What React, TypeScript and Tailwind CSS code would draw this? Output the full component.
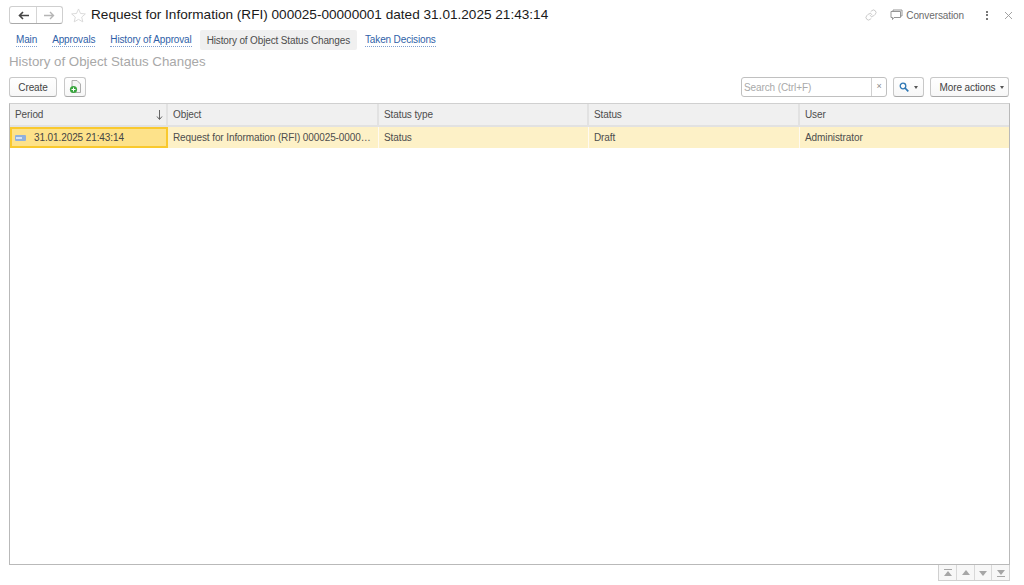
import { FC, ReactNode } from "react";
import { Link } from "lucide-react";

const tabs = ["Main", "Approvals", "History of Approval", "History of Object Status Changes", "Taken Decisions"];
const activeTab = "History of Object Status Changes";

const columns = [
  { label: "Period", value: "31.01.2025 21:43:14", width: "w-[158px]" },
  { label: "Object", value: "Request for Information (RFI) 000025-0000…", width: "w-[211px]" },
  { label: "Status type", value: "Status", width: "w-[210px]" },
  { label: "Status", value: "Draft", width: "w-[211px]" },
  { label: "User", value: "Administrator", width: "flex-1" },
];

const ToolButton: FC<{ className?: string; children: ReactNode }> = ({ className = "", children }) => (
  <div
    className={`flex h-[20px] items-center justify-center rounded-[3px] border border-[#c8c8c8] border-b-[#a9a9a9] bg-gradient-to-b from-white to-[#f7f7f7] text-[#444] ${className}`}
  >
    {children}
  </div>
);

const Caret = () => <span className="h-0 w-0 border-x-[2.5px] border-t-[3px] border-x-transparent border-t-[#555]" />;

const NavArrow: FC<{ path: string }> = ({ path }) => (
  <div className="flex h-full w-[18px] items-center justify-center border-l border-[#d8d8d8] first:border-l-0">
    <svg width="10" height="8" viewBox="0 0 10 8" fill="#a6a6a6">
      <path d={path} />
    </svg>
  </div>
);

export default function App() {
  return (
    <div className="flex h-[585px] w-[1024px] flex-col overflow-hidden bg-white pl-[9px] pr-[15px] text-[10px] tracking-[-0.1px] text-[#4d4d4d] [font-family:'Liberation_Sans',Arial,sans-serif]">
      <div className="mt-[6px] flex h-[18px] items-center">
        <div className="flex h-[18px] w-[54px] rounded-[3px] border border-[#cfcfcf] border-b-[#aaa]">
          <div className="flex w-[27px] items-center justify-center border-r border-[#d5d5d5]">
            <svg width="11" height="9" viewBox="0 0 11 9" fill="none" stroke="#444" strokeWidth="1.6">
              <path d="M11 4.5H2M5 1 1.5 4.5 5 8" />
            </svg>
          </div>
          <div className="flex flex-1 items-center justify-center">
            <svg width="11" height="9" viewBox="0 0 11 9" fill="none" stroke="#b5b5b5" strokeWidth="1.4">
              <path d="M0 4.5h9M6 1l3.5 3.5L6 8" />
            </svg>
          </div>
        </div>
        <svg className="ml-[8px]" width="15" height="15" viewBox="0 0 16 16" fill="none" stroke="#d4d4d4" strokeWidth="0.9">
          <path d="M8 1l2.100 4.800 5.200.5-3.900 3.400 1.200 5.100L8 12.100l-4.600 2.700 1.200-5.100L.7 6.300l5.200-.5z" />
        </svg>
        <h1 className="ml-[5px] text-[13.6px] font-normal leading-none tracking-normal text-[#1a1a1a]">
          Request for Information (RFI) 000025-00000001 dated 31.01.2025 21:43:14
        </h1>
        <div className="ml-auto mr-[-4px] flex items-center text-[#6b6b6b]">
          <Link size={12} strokeWidth={1.2} color="#a8a8a8" />
          <svg className="ml-[13px]" width="13" height="12" viewBox="0 0 13 12" fill="none" stroke="#8a8a8a" strokeWidth="0.9">
            <path d="M3 2.500V1h9v6h-1.500M1 2.500h9.500V8.500H4L2.500 10.500V8.500H1z" />
          </svg>
          <span className="ml-[3px]">Conversation</span>
          <div className="ml-[22px] flex flex-col gap-[1.500px]">
            <span className="h-[2px] w-[2px] bg-[#777]" />
            <span className="h-[2px] w-[2px] bg-[#777]" />
            <span className="h-[2px] w-[2px] bg-[#777]" />
          </div>
          <svg className="ml-[16px]" width="9" height="9" viewBox="0 0 9 9" stroke="#999" strokeWidth="0.9">
            <path d="M1 1l7 7M8 1 1 8" />
          </svg>
        </div>
      </div>

      <div className="mt-[6px] flex h-[20px] items-center gap-[1px] tracking-[-0.14px]">
        {tabs.map((tab) =>
          tab === activeTab ? (
            <span key={tab} className="flex h-[20px] items-center rounded-[2px] bg-[#f0f0f0] px-[7px] text-[#4d4d4d]">
              {tab}
            </span>
          ) : (
            <span key={tab} className="flex h-[20px] items-center px-[7px] text-[#2f5fa8]">
              <span className="border-b border-dotted border-[#7f9fd0] leading-[12px]">{tab}</span>
            </span>
          ),
        )}
      </div>

      <div className="mt-[3px] h-[17px] text-[13.3px] leading-[17px] tracking-normal text-[#a8a8a8]">History of Object Status Changes</div>

      <div className="mt-[7px] flex h-[20px] items-center">
        <ToolButton className="w-[48px]">Create</ToolButton>
        <ToolButton className="ml-[7px] w-[22px]">
          <svg width="13" height="14" viewBox="0 0 13 14">
            <path d="M3 .5h5l3.500 3.500v8.500H3z" fill="#f4f4f4" stroke="#9a9a9a" strokeWidth="0.8" />
            <circle cx="4.500" cy="9.500" r="3.600" fill="#3aa63f" />
            <path d="M4.500 7.500v4M2.500 9.500h4" stroke="#fff" strokeWidth="1" />
          </svg>
        </ToolButton>
        <div className="ml-auto flex h-[20px] w-[146px] items-center rounded-[3px] border border-[#c0c0c0]">
          <span className="flex-1 pl-[2px] text-[#a9a9a9]">Search (Ctrl+F)</span>
          <span className="flex h-full w-[15px] items-center justify-center border-l border-[#d0d0d0] text-[9px] text-[#888]">×</span>
        </div>
        <ToolButton className="ml-[6px] w-[31px] gap-[5px]">
          <svg width="10" height="10" viewBox="0 0 10 10" fill="none" stroke="#2f78b5" strokeWidth="1.300">
            <circle cx="4" cy="4" r="2.800" />
            <path d="M6 6l3.300 3.300" strokeWidth="1.700" />
          </svg>
          <Caret />
        </ToolButton>
        <ToolButton className="ml-[6px] w-[79px] gap-[4px] pl-[4px]">
          More actions
          <Caret />
        </ToolButton>
      </div>

      <div className="mt-[6px] h-[462px] w-[1001px] border border-[#b9b9b9] border-t-[#d0d0d0]">
        <div className="flex h-[23px] border-b-2 border-[#e2e2e2] bg-[#f0f0f0]">
          {columns.map((col) => (
            <div key={col.label} className={`flex items-center border-r-2 border-[#e2e2e2] px-[5px] last:border-r-0 ${col.width}`}>
              {col.label}
              {col.label === "Period" && (
                <svg className="ml-auto mr-[-2px]" width="7" height="10" viewBox="0 0 7 10" fill="none" stroke="#555" strokeWidth="0.9">
                  <path d="M3.500 0v9M1 6.500l2.500 3 2.500-3" />
                </svg>
              )}
            </div>
          ))}
        </div>
        <div className="flex h-[21px] bg-[#fdf1c7]">
          {columns.map((col) =>
            col.label === "Period" ? (
              <div key={col.label} className={`flex items-center border-2 border-[#f9c92e] bg-[#fde28a] pl-[3px] text-[#444] ${col.width}`}>
                <span className="flex h-[6px] w-[11px] items-center rounded-[1px] bg-[#8fb0de] pl-[1px]">
                  <span className="h-[2px] w-[6px] bg-[#d4e3f7]" />
                </span>
                <span className="ml-[8px]">{col.value}</span>
              </div>
            ) : (
              <div key={col.label} className={`flex items-center whitespace-nowrap border-r border-[#fffaf0] px-[5px] last:border-r-0 ${col.width}`}>
                {col.value}
              </div>
            ),
          )}
        </div>
      </div>

      <div className="mr-[-1px] flex justify-end">
        <div className="flex h-[16px] w-[72px] border border-t-0 border-[#d0d0d0] bg-[#f7f7f7]">
          <NavArrow path="M1 0h8v1H1zM5 2l4 5H1z" />
          <NavArrow path="M5 1l4 5H1z" />
          <NavArrow path="M5 7 1 2h8z" />
          <NavArrow path="M1 7h8v1H1zM5 6 1 1h8z" />
        </div>
      </div>
    </div>
  );
}
